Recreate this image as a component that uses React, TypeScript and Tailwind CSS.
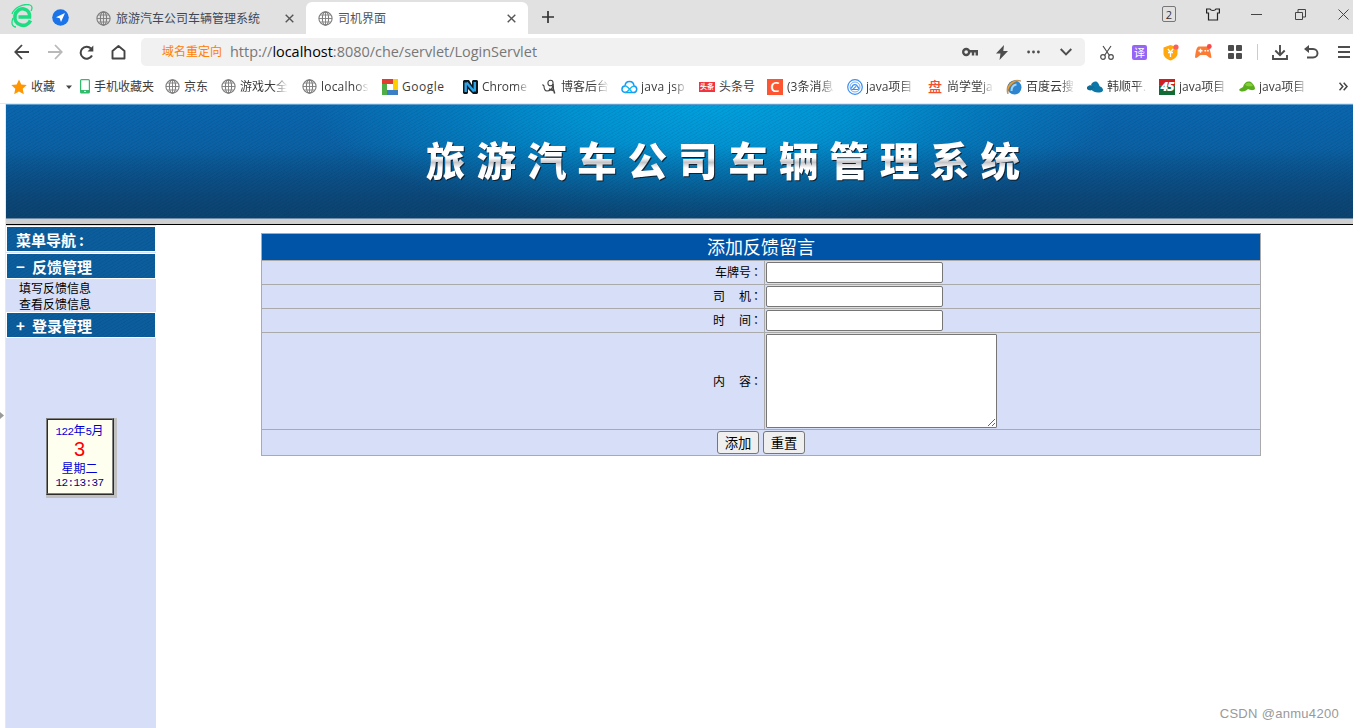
import type { ReactNode } from 'react';

const GlobeIcon = () => (
  <svg width="15" height="15" viewBox="0 0 15 15" fill="none" stroke="#7d7d7d" strokeWidth="1.1" className="shrink-0">
    <circle cx="7.5" cy="7.5" r="6.6" />
    <ellipse cx="7.5" cy="7.5" rx="3.1" ry="6.6" />
    <path d="M7.5 1v13M1 7.5h13M2.2 4h10.6M2.2 11h10.6" strokeWidth=".9" />
  </svg>
);

const CloseIcon = () => (
  <svg width="9" height="9" viewBox="0 0 9 9" stroke="#555" strokeWidth="1.4" className="shrink-0">
    <path d="M.7.7l7.6 7.6M8.3.7L.7 8.3" />
  </svg>
);

const bookmarks: { label: string; width: string; text: string; fade?: boolean; icon: ReactNode }[] = [
  {
    label: '手机收藏夹', width: 'w-[85px]', text: 'w-[62px] ml-1',
    icon: (
      <svg width="10" height="15" viewBox="0 0 10 15" className="shrink-0">
        <rect x=".6" y=".6" width="8.8" height="13.4" rx="1" fill="#fff" stroke="#2fbd6c" strokeWidth="1.2" />
        <path d="M1 11h8v3H1z" fill="#2fbd6c" />
        <path d="M4 12.4h2" stroke="#fff" />
      </svg>
    ),
  },
  { label: '京东', width: 'w-[56px]', text: 'w-[26px] ml-1', icon: <GlobeIcon /> },
  { label: '游戏大全', width: 'w-[81px]', text: 'w-[48px] ml-1', fade: true, icon: <GlobeIcon /> },
  { label: 'localhos', width: 'w-[80px]', text: 'w-[48px] ml-1 tracking-[0.2px]', fade: true, icon: <GlobeIcon /> },
  {
    label: 'Google', width: 'w-[80px]', text: 'w-[47px] ml-1 tracking-[0.5px]',
    icon: (
      <svg width="16" height="16" viewBox="0 0 16 16" className="shrink-0">
        <path d="M0 0h11v5H0z" fill="#e03c31" />
        <path d="M11 0h5v11h-5z" fill="#ffce00" />
        <path d="M5 11h11v5H5z" fill="#3b7fc4" />
        <path d="M0 5h5v11H0z" fill="#4fae47" />
      </svg>
    ),
  },
  {
    label: 'Chrome', width: 'w-[79px]', text: 'w-[48px] ml-1', fade: true,
    icon: (
      <svg width="16" height="16" viewBox="0 0 16 16" className="shrink-0">
        <path d="M1 2l1-1h5l3 5V2l1-1h4l1 1v12l-1 1h-4L6 10v4l-1 1H2l-1-1z" fill="#0d1820" />
        <path d="M3.7 13V3.5M12.8 12.5V3M4.5 3.5l7.5 9" fill="none" stroke="#2da3e8" strokeWidth="2.4" />
      </svg>
    ),
  },
  {
    label: '博客后台', width: 'w-[80px]', text: 'w-[48px] ml-1', fade: true,
    icon: (
      <svg width="16" height="16" viewBox="0 0 16 16" fill="none" stroke="#444" strokeWidth="1.1" className="shrink-0">
        <path d="M1.5 5.5L3 7c0 3 1 5 3 5 3 0 5-2 6-5" />
        <ellipse cx="9.5" cy="4" rx="2.6" ry="2.8" />
        <path d="M12 5l.3 5 1.4 4.5M8 10l4 1.5" strokeWidth="1.5" />
      </svg>
    ),
  },
  {
    label: 'java jsp', width: 'w-[78px]', text: 'w-[47px] ml-[3px] tracking-[0.3px]', fade: true,
    icon: (
      <svg width="17" height="14" viewBox="0 0 17 14" fill="none" strokeWidth="1.5" className="shrink-0">
        <path d="M4.5 12.5C-.5 12 .3 6.2 4 6c.4-6 8.6-6 9 0 4 .8 3.5 6.5-.8 6.5z" stroke="#159cf5" />
        <path d="M4 12.5c4 0 5-6.5 9-6.5M4.5 6c2 0 4 3.5 6.5 6" stroke="#12b8f0" strokeWidth="1.3" />
      </svg>
    ),
  },
  {
    label: '头条号', width: 'w-[68px]', text: 'w-[38px] ml-1',
    icon: <span className="flex h-[10px] w-4 shrink-0 items-center justify-center bg-[#f5333f] text-[7px] font-bold leading-none text-white">头条</span>,
  },
  {
    label: '(3条消息', width: 'w-[80px]', text: 'w-[48px] ml-1', fade: true,
    icon: <span className="flex size-4 shrink-0 items-center justify-center bg-[#fc5531] text-[15px] font-semibold leading-none text-white">C</span>,
  },
  {
    label: 'java项目', width: 'w-[81px]', text: 'w-[49px] ml-[3px]', fade: true,
    icon: (
      <svg width="16" height="16" viewBox="0 0 16 16" fill="none" stroke="#3b8ff0" className="shrink-0">
        <circle cx="8" cy="8" r="7.3" strokeWidth="1.2" />
        <circle cx="8" cy="8" r="5" strokeWidth=".7" />
        <path d="M5 10.5c-1.5-.2-1.4-2.5.3-2.6.4-3 4.8-3 5.2 0 1.8.2 1.7 2.6 0 2.6zM6 10.4l3-3" strokeWidth="1.1" />
      </svg>
    ),
  },
  {
    label: '尚学堂ja', width: 'w-[78px]', text: 'w-[47px] ml-1', fade: true,
    icon: <span className="w-[15px] shrink-0 text-[14px] font-medium leading-none text-[#f0502d]">盘</span>,
  },
  {
    label: '百度云搜', width: 'w-[81px]', text: 'w-[49px] ml-1', fade: true,
    icon: (
      <svg width="16" height="16" viewBox="0 0 16 16" className="shrink-0">
        <circle cx="8.5" cy="8.5" r="7" fill="#2d84cf" />
        <path d="M5.5 12c0-4 1.5-6 5-6.5" fill="none" stroke="#9bd6fa" strokeWidth="2" />
        <path d="M2 15C-2 8 6-1.500 15 2 8.500 1.500 2 7 2 15z" fill="#e9a13b" stroke="#93662b" strokeWidth=".5" />
      </svg>
    ),
  },
  {
    label: '韩顺平.', width: 'w-[72px]', text: 'w-[40px] ml-1', fade: true,
    icon: (
      <svg width="16" height="12" viewBox="0 0 16 12" className="shrink-0">
        <path d="M4 4C5 1 9-1 11 2c1 1 1 2.500 2 3.500 2 .5 3 2 3 4-1 2-3 2-5 2-3 0-5-1-7-3l3-1z" fill="#0b77a8" />
        <path d="M0 6c2-2 4-2 6-1l2 2-3 2C3 10 1 9 0 8z" fill="#0e6c98" />
      </svg>
    ),
  },
  {
    label: 'java项目', width: 'w-[80px]', text: 'w-[49px] ml-1', fade: true,
    icon: (
      <span className="flex size-4 shrink-0 items-center justify-center bg-linear-to-b from-[#cf1f1f] from-35% to-[#126b35] to-45% text-[13px] font-extrabold italic leading-none tracking-[-1px] text-white">45</span>
    ),
  },
  {
    label: 'java项目', width: 'w-[80px]', text: 'w-[49px] ml-1', fade: true,
    icon: (
      <svg width="16" height="12" viewBox="0 0 16 12" className="shrink-0">
        <path d="M0 9c1-2 3-2 4-3C5 1 10-1 13 2c2 2 3 4 3 6-2 2-5 1-7 0-2 2-6 4-9 1z" fill="#5aae1d" />
        <path d="M6 4c2-3 6-3 8 1-3 0-5 1-8-1z" fill="#86cf3a" />
      </svg>
    ),
  },
];

const fields = [
  { id: 'car', label: <>车牌号</> },
  { id: 'driver', label: <>司<span className="inline-block w-[14px]" />机</> },
  { id: 'time', label: <>时<span className="inline-block w-[14px]" />间</> },
];

// faint diagonal weave shared by the banner and the menu headers
const WEAVE = 'bg-[repeating-linear-gradient(150deg,rgba(0,20,60,0.07)_0px,rgba(0,20,60,0.07)_1px,transparent_1px,transparent_3px)]';

function TabStrip() {
  return (
    <div className="flex h-[34px] bg-[#e1e1e1]">
      <div className="flex w-[306px] items-center">
        <svg width="23" height="24" viewBox="0 0 23 24" fill="none" className="ml-[11px] mb-0.5 shrink-0">
          <path d="M19.5 16.5C17.5 21 13 22 10 21 5.5 20 3.3 16 4 11.5 4.800 7 9 4 13 5c4.5 1 6 4.5 5.5 8H7.5" stroke="#1ddc82" strokeWidth="3.6" />
          <path d="M1 10C3 4 12-1 19 1c3 1 2 4 1 6M2 14c-2 5-1 9 3 9" stroke="#1ddc82" strokeWidth="1.3" />
        </svg>
        <svg width="17" height="17" viewBox="0 0 17 17" className="ml-[18px] shrink-0">
          <circle cx="8.5" cy="8.5" r="8.3" fill="#1a73e8" />
          <path d="M13 4L4 8.200l3.7 1.100L9 13z" fill="#fff" />
        </svg>
        <span className="ml-[27px] mt-[3px] flex items-center"><GlobeIcon /></span>
        <span className="ml-[5px] mt-[3px] w-[150px] whitespace-nowrap text-[12px] text-[#3b4859]">旅游汽车公司车辆管理系统</span>
        <span className="ml-[19px] mt-[3px]"><CloseIcon /></span>
      </div>
      <div className="mt-[2px] flex w-[222px] items-center rounded-t-[6px] bg-white">
        <span className="ml-3"><GlobeIcon /></span>
        <span className="ml-[5px] mt-px w-[150px] text-[12px] text-[#555]">司机界面</span>
        <span className="ml-[19px]"><CloseIcon /></span>
      </div>
      <svg width="12" height="12" viewBox="0 0 12 12" stroke="#333" strokeWidth="1.7" className="ml-[14px] mt-[11px]">
        <path d="M6 0v12M0 6h12" />
      </svg>
      <div className="ml-auto flex h-[28px] items-center">
        <span className="flex h-4 w-[14px] items-center justify-center rounded-[2px] border border-[#777] text-[11px] leading-none text-[#333]">2</span>
        <svg width="14" height="13" viewBox="0 0 14 13" fill="none" stroke="#222" strokeWidth="1.2" className="ml-[30px]">
          <path d="M4 1C5 3 9 3 10 1h3.4v4H11.5v7h-9V5H.6V1z" />
        </svg>
        <span className="ml-[31px] h-px w-[11px] bg-[#444]" />
        <svg width="11" height="11" viewBox="0 0 11 11" fill="none" stroke="#444" className="ml-[33px]">
          <path d="M.5 3.500h7v7h-7zM3 3V.5h7.500V8H8" />
        </svg>
        <svg width="11" height="11" viewBox="0 0 11 11" stroke="#444" className="ml-[32px] mr-[4px]">
          <path d="M.5.5l10 10M10.5.5l-10 10" />
        </svg>
      </div>
    </div>
  );
}

function Toolbar() {
  return (
    <div className="flex h-9 items-center">
      <svg width="15" height="16" viewBox="0 0 15 16" fill="none" stroke="#444" strokeWidth="1.8" className="ml-[14px]">
        <path d="M15 8H1.500M8 1L1.300 8 8 15" />
      </svg>
      <svg width="15" height="16" viewBox="0 0 15 16" fill="none" stroke="#b9b9b9" strokeWidth="1.8" className="ml-[19px]">
        <path d="M0 8h13.500M7 1l6.700 7L7 15" />
      </svg>
      <svg width="15" height="15" viewBox="0 0 15 15" fill="none" stroke="#444" strokeWidth="2" className="ml-4">
        <path d="M13 10.500A6 6 0 1 1 12 3.500" />
        <path d="M14.300 .5v6H8.500z" fill="#444" stroke="none" />
      </svg>
      <svg width="15" height="15" viewBox="0 0 15 15" fill="none" stroke="#444" strokeWidth="1.9" className="ml-[17px]">
        <path d="M1.500 13.500V6L7.500 1l6 5v7.500z" strokeLinejoin="round" />
      </svg>
      <div className="ml-[15px] flex h-7 w-[944px] items-center rounded-[5px] bg-[#f1f1f1]">
        <span className="ml-[21px] w-[68px] text-[12px] text-[#ff8000]">域名重定向</span>
        <span className="w-[732px] whitespace-nowrap font-['Open_Sans','Noto_Sans_CJK_SC',sans-serif] text-[14.45px] text-[#777]">
          http://<span className="text-black">localhost</span>:8080/che/servlet/LoginServlet
        </span>
        <svg width="16" height="10" viewBox="0 0 16 10" fill="none" stroke="#4d4d4d" strokeWidth="2.4" className="shrink-0">
          <circle cx="4.200" cy="5" r="3" />
          <path d="M7.500 4.200H16M11 4v4.500M14.800 4v4.500" />
        </svg>
        <svg width="12" height="15" viewBox="0 0 12 15" fill="#4d4d4d" className="ml-[18px] shrink-0">
          <path d="M8 0L0 8.500h4.500L3.500 15 12 6H7.300z" />
        </svg>
        <svg width="13" height="4" viewBox="0 0 13 4" fill="#4d4d4d" className="ml-[19px] shrink-0">
          <circle cx="1.600" cy="2" r="1.400" /><circle cx="6.500" cy="2" r="1.400" /><circle cx="11.400" cy="2" r="1.400" />
        </svg>
        <svg width="12" height="8" viewBox="0 0 12 8" fill="none" stroke="#4d4d4d" strokeWidth="1.9" className="ml-5 shrink-0">
          <path d="M.7 1L6 6.500 11.300 1" />
        </svg>
      </div>
      <svg width="14" height="15" viewBox="0 0 14 15" fill="none" stroke="#4d4d4d" strokeWidth="1.2" className="ml-[15px]">
        <path d="M3 1l6.500 9.500M11 1L4.500 10.500" />
        <circle cx="3" cy="12" r="2.300" /><circle cx="11" cy="12" r="2.300" />
      </svg>
      <span className="ml-[18px] flex size-[15px] items-center justify-center rounded-[2px] bg-[#9566f6] text-[11px] leading-none text-white">译</span>
      <svg width="16" height="17" viewBox="0 0 16 17" className="ml-4">
        <path d="M7.500 1l7 2.500v6c0 3.500-3 5.500-7 7-4-1.500-7-3.500-7-7v-6z" fill="#ffa70d" />
        <path d="M4.800 5l2.700 3 2.700-3M7.500 8v5M5 8.500h5" fill="none" stroke="#fff" strokeWidth="1.3" />
        <circle cx="13" cy="3" r="2.600" fill="#fa5f5f" />
      </svg>
      <svg width="17" height="16" viewBox="0 0 17 16" className="ml-4">
        <path d="M4 2.500h8c3 0 4 8 4.500 11-2 1.500-3.500-1.500-5.500-2.500H5.500c-2 1-3.500 4-5.500 2.500C.5 10 1 2.500 4 2.500z" fill="#fb7b35" />
        <path d="M3.500 6.700h4M5.500 4.700v4M9.500 6.700h1.600M12.100 6.700h1.600" stroke="#fff" strokeWidth="1.4" />
        <circle cx="14.300" cy="2.500" r="2.400" fill="#fa4747" />
      </svg>
      <svg width="14" height="14" viewBox="0 0 14 14" fill="#4d4d4d" className="ml-4">
        <rect width="6" height="6" rx="1" /><rect x="8" width="6" height="6" rx="1" />
        <rect y="8" width="6" height="6" rx="1" /><rect x="8" y="8" width="6" height="6" rx="1" />
      </svg>
      <span className="ml-[15px] h-4 w-px bg-[#ccc]" />
      <svg width="16" height="15" viewBox="0 0 16 15" fill="none" stroke="#4d4d4d" strokeWidth="1.9" className="ml-[14px]">
        <path d="M8 0v10M3.300 5.500L8 10.200l4.700-4.700M1 10v4h14v-4" />
      </svg>
      <svg width="15" height="14" viewBox="0 0 15 14" fill="none" stroke="#4d4d4d" strokeWidth="1.9" className="ml-4">
        <path d="M3 4h6c6 0 6 8.500 0 8.500H3" />
        <path d="M5 0v8L0 4z" fill="#4d4d4d" stroke="none" />
      </svg>
      <svg width="12" height="12" viewBox="0 0 12 12" stroke="#4d4d4d" strokeWidth="2" className="ml-[19px]">
        <path d="M0 1h12M0 6h12M0 11h12" />
      </svg>
    </div>
  );
}

function BookmarkBar() {
  return (
    <div className="flex h-[34px] items-center border-b border-[#e8e8e8] text-[12px] text-[#3c3c3c]">
      <svg width="16" height="16" viewBox="0 0 16 16" fill="#ff9500" className="ml-[11px] shrink-0">
        <path d="M8 .5l2.300 5 5.400.6-4 3.700 1.100 5.500L8 12.600l-4.800 2.700 1.100-5.500-4-3.700 5.400-.6z" />
      </svg>
      <span className="ml-1 mt-px w-[35px] shrink-0">收藏</span>
      <svg width="14" height="5" viewBox="0 0 14 5" fill="#444" className="mt-px shrink-0"><path d="M0 .5h6L3 4z" /></svg>
      {bookmarks.map((b, i) => (
        <div key={i} className={`flex shrink-0 items-center ${b.width}`}>
          {b.icon}
          <span className={`mt-px shrink-0 whitespace-nowrap ${b.text} ${b.fade ? 'mask-r-from-70% mask-r-to-100%' : ''}`}>
            {b.label}
          </span>
        </div>
      ))}
      <svg width="9" height="9" viewBox="0 0 9 9" fill="none" stroke="#444" strokeWidth="1.5" className="ml-5 shrink-0">
        <path d="M.5.7l3.300 3.800L.5 8.300M4.700.7L8 4.500 4.700 8.300" />
      </svg>
    </div>
  );
}

function Banner() {
  return (
    <div className="border-b border-black">
      <div className="h-[115px] border-t border-b border-t-[#5f9fd0] border-b-[#6f8ba3] bg-[linear-gradient(transparent_35%,#0b4370b0_100%),radial-gradient(ellipse_400px_125px_at_52.5%_0%,#00a0dc_0%,#0099d6e0_35%,#0088c8a0_65%,#0a66ac00_100%),linear-gradient(#0a66ad_0%,#0a61a3_40%,#0b528b_70%,#0b4370_100%)]">
        <div className={`flex h-full justify-center pl-[98px] ${WEAVE}`}>
          <h1 className="mt-[26px] h-[56px] whitespace-nowrap bg-linear-to-b from-white from-48% via-[#c4c4c8] via-56% to-white to-66% bg-clip-text font-['Noto_Sans_CJK_SC',sans-serif] text-[39.5px] font-black leading-[56px] tracking-[10.9px] text-transparent drop-shadow-[1px_1px_0px_#10202f]">
            旅游汽车公司车辆管理系统
          </h1>
        </div>
      </div>
      <div className="h-[5px] bg-[#cfcfcf]" />
    </div>
  );
}

const MenuHeader = ({ children }: { children: ReactNode }) => (
  <div className="h-[26px] border border-white bg-[#0b5d9c]">
    <div className={`h-full pl-[9px] font-['Noto_Sans_CJK_SC',sans-serif] text-[15px] font-bold leading-[25px] text-white ${WEAVE}`}>
      {children}
    </div>
  </div>
);

const Toggle = ({ sign }: { sign: string }) => (
  <span className="inline-block w-4 font-['Noto_Sans_CJK_SC',sans-serif]">{sign}</span>
);

function Sidebar() {
  return (
    <aside className="w-[150px] shrink-0 bg-[#d6dff7] pt-px">
      <MenuHeader>菜单导航<span className="ml-[3px]">:</span></MenuHeader>
      <div className="mt-px">
        <MenuHeader><Toggle sign="−" />反馈管理</MenuHeader>
      </div>
      <ul className="h-[33px] pl-[13px] pt-[2px] text-[12px] leading-4 text-black">
        <li>填写反馈信息</li>
        <li>查看反馈信息</li>
      </ul>
      <MenuHeader><Toggle sign="+" />登录管理</MenuHeader>
      <div className="ml-10 mt-20 h-20 w-[71px] bg-[#c0c0c0]">
        <div className="h-[77px] w-[68px] border border-b-[#2c2c2c] border-l-[#808080] border-r-[#2c2c2c] border-t-[#808080]">
          <div className="h-full border border-b-[#808080] border-l-[#2c2c2c] border-r-[#808080] border-t-[#2c2c2c] bg-[#ffffef] pt-[2px] pr-px text-center text-[12px] text-[#0000d6]">
            <p className="h-[17px] leading-[17px]"><span className="font-['Liberation_Mono',monospace] text-[11px] tracking-[-0.6px]">122</span>年<span className="font-['Liberation_Mono',monospace] text-[11px] tracking-[-0.6px]">5</span>月</p>
            <p className="h-[20px] font-['Liberation_Sans',sans-serif] text-[20px] leading-[20px] text-[#ff0000]">3</p>
            <p className="h-[18px] leading-[20px]">星期二</p>
            <p className="h-[11px] font-['Liberation_Mono',monospace] text-[11px] leading-[13px] tracking-[-0.6px] text-[#00008b]">12:13:37</p>
          </div>
        </div>
      </div>
    </aside>
  );
}

const Colon = () => <span className="mr-px -ml-px font-['Noto_Sans_CJK_TC',sans-serif]">：</span>;

function FeedbackForm() {
  return (
    <form className="ml-[105px] mt-2 h-[223px] w-[1000px] border border-[#aaa] bg-[#d6dff7] text-[12px] text-black">
      <div className="h-[27px] border-b border-[#aaa] bg-[#0054a8] text-center text-[18px] leading-[26px] text-white">添加反馈留言</div>
      {fields.map((f) => (
        <div key={f.id} className="flex h-6 border-b border-[#aaa]">
          <label htmlFor={f.id} className="w-[503px] border-r border-[#aaa] pr-px text-right leading-[22px]">{f.label}<Colon /></label>
          <input id={f.id} className="ml-px mt-px h-[21px] w-[177px] rounded-[2px] border border-[#767676] bg-white px-0.5" />
        </div>
      ))}
      <div className="flex h-[97px] border-b border-[#aaa]">
        <label htmlFor="content" className="w-[503px] border-r border-[#aaa] pr-px text-right leading-[96px]">内<span className="inline-block w-[14px]" />容<Colon /></label>
        <textarea id="content" className="ml-px mt-px h-[94px] w-[231px] resize rounded-[1px] border border-[#767676] bg-white p-0.5" />
      </div>
      <div className="flex justify-center gap-1 pt-px text-[13.3px]">
        <button type="button" className="h-[23px] w-[42px] rounded-[3px] border border-[#767676] bg-[#efefef] leading-[22px]">添加</button>
        <button type="button" className="h-[23px] w-[42px] rounded-[3px] border border-[#767676] bg-[#efefef] leading-[22px]">重置</button>
      </div>
    </form>
  );
}

export default function App() {
  return (
    <div className="relative flex h-[728px] w-[1353px] flex-col overflow-hidden bg-white font-['Open_Sans','Noto_Sans_CJK_SC',sans-serif]">
      <TabStrip />
      <Toolbar />
      <BookmarkBar />
      <div className="flex flex-1">
        <div className="flex w-[6px] flex-col border-r border-[#e8e8e8]">
          <svg width="4" height="7" viewBox="0 0 4 7" fill="#999" className="mt-[308px]"><path d="M0 0l4 3.500L0 7z" /></svg>
        </div>
        <div className="flex flex-1 flex-col">
          <Banner />
          <div className="flex flex-1">
            <Sidebar />
            <main><FeedbackForm /></main>
          </div>
        </div>
      </div>
      <span className="absolute bottom-[5px] right-[14px] font-['Liberation_Sans',sans-serif] text-[13px] tracking-[0.3px] text-[#999]">CSDN @anmu4200</span>
    </div>
  );
}
